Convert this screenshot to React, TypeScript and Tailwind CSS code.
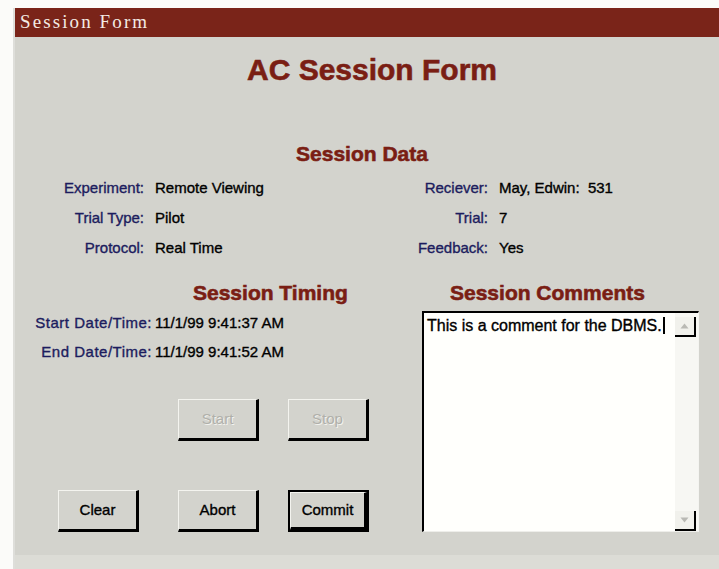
import React from 'react';

const sans = "font-['Liberation_Sans',Arial,sans-serif]";
const heading = "font-['Liberation_Sans',Arial,sans-serif] font-bold text-[#7a1e14] [-webkit-text-stroke:0.6px_#7a1e14]";

function Field({ label, value }: { label: string; value: string }) {
  return (
    <>
      <div className="h-[30px] leading-[30px] text-right text-[#1c1c5e] [-webkit-text-stroke:0.35px_#1c1c5e] whitespace-nowrap">
        {label}
      </div>
      <div className="h-[30px] leading-[30px] text-black [-webkit-text-stroke:0.35px_#000] whitespace-pre">{value}</div>
    </>
  );
}

function Button({
  children,
  disabled,
  isDefault,
  className = '',
}: {
  children: React.ReactNode;
  disabled?: boolean;
  isDefault?: boolean;
  className?: string;
}) {
  return (
    <button
      disabled={disabled}
      className={`w-[81px] h-[42px] ${isDefault ? 'border-2 border-black' : ''} ${className}`}
    >
      <div className="w-full h-full flex items-center justify-center bg-[#d3d3cd] border-t border-l border-[#f4f4ef] border-r-[3px] border-b-[3px] border-r-black border-b-black">
        <span
          className={
            disabled
              ? 'text-[#b0b0aa] [text-shadow:1px_1px_0_#f2f2ee]'
              : 'text-black [-webkit-text-stroke:0.35px_#000]'
          }
        >
          {children}
        </span>
      </div>
    </button>
  );
}

function ScrollArrow({ up }: { up?: boolean }) {
  return (
    <div className="w-[21px] h-[20px] flex items-center justify-center border-r-2 border-b-2 border-black bg-[#f1f1ec]">
      <svg width="9" height="6" viewBox="0 0 9 6">
        <path d={up ? 'M0.5 5.5 L4.5 0.5 L8.5 5.5 Z' : 'M0.5 0.5 L4.5 5.5 L8.5 0.5 Z'} fill="#b9b9b4" />
      </svg>
    </div>
  );
}

export default function App() {
  return (
    <div className={`min-h-screen bg-[#fbfbf9] pt-[8px] pl-[13px] ${sans} text-[15px]`}>
      <div className="border-l-2 border-[#dededa]">
        {/* Title bar */}
        <div className="h-[29px] bg-[#7a2419] flex items-center pl-[5px]">
          <span className="font-['Liberation_Serif','Times_New_Roman',serif] text-[19px] tracking-[2.1px] text-[#f3ebe4]">
            Session Form
          </span>
        </div>

        <div className="bg-[#d3d3cd] pt-[15px] pb-[23px]">
          <h1 className={`${heading} text-[30px] leading-[36px] text-center ml-[10px]`}>AC Session Form</h1>

          {/* Session data */}
          <h2 className={`${heading} text-[21px] leading-[24px] text-center mt-[54px] -ml-[10px]`}>Session Data</h2>
          <div className="grid grid-cols-[100px_200px_122px_1fr] gap-x-[11px] pl-[29px] mt-[7px]">
            <Field label="Experiment:" value="Remote Viewing" />
            <Field label="Reciever:" value="May, Edwin:  531" />
            <Field label="Trial Type:" value="Pilot" />
            <Field label="Trial:" value="7" />
            <Field label="Protocol:" value="Real Time" />
            <Field label="Feedback:" value="Yes" />
          </div>

          <div className="flex mt-[18px]">
            {/* Timing + buttons */}
            <div className="w-[407px]">
              <h2 className={`${heading} text-[21px] leading-[24px] pl-[178px] whitespace-nowrap`}>Session Timing</h2>
              <div className="grid grid-cols-[137px_1fr] gap-x-[3px] mt-[3px] [-webkit-text-stroke:0.35px_currentColor]">
                <div className="h-[29px] leading-[29px] text-right text-[#1c1c5e] tracking-[0.5px] whitespace-nowrap">Start Date/Time:</div>
                <div className="h-[29px] leading-[29px] whitespace-nowrap">11/1/99 9:41:37 AM</div>
                <div className="h-[29px] leading-[29px] text-right text-[#1c1c5e] tracking-[0.5px] whitespace-nowrap">End Date/Time:</div>
                <div className="h-[29px] leading-[29px] whitespace-nowrap">11/1/99 9:41:52 AM</div>
              </div>
              <div className="flex pl-[163px] mt-[33px]">
                <Button disabled>Start</Button>
                <Button disabled className="ml-[29px]">Stop</Button>
              </div>
              <div className="flex pl-[43px] mt-[49px]">
                <Button>Clear</Button>
                <Button className="ml-[39px]">Abort</Button>
                <Button isDefault className="ml-[29px]">Commit</Button>
              </div>
            </div>

            {/* Comments */}
            <div className="w-[277px]">
              <h2 className={`${heading} text-[21px] leading-[24px] pl-[28px] whitespace-nowrap`}>
                Session Comments
              </h2>
              <div className="mt-[6px] h-[221px] flex bg-[#fffffc] border-t-2 border-l-2 border-black border-r border-b border-r-[#f4f4f0] border-b-[#eeeeea]">
                <div className="flex-1 pl-[3px] pt-[3px] text-[16px] leading-[20px] text-black [-webkit-text-stroke:0.35px_#000] whitespace-nowrap">
                  This is a comment for the DBMS.
                  <span className="inline-block w-[2px] h-[17px] bg-black align-[-3px] ml-[1px]" />
                </div>
                <div className="w-[23px] flex flex-col justify-between bg-[#f7f7f3] pt-[4px]">
                  <ScrollArrow up />
                  <ScrollArrow />
                </div>
              </div>
            </div>
          </div>
        </div>
        <div className="h-[20px] bg-[#dcdcd6]" />
      </div>
    </div>
  );
}
